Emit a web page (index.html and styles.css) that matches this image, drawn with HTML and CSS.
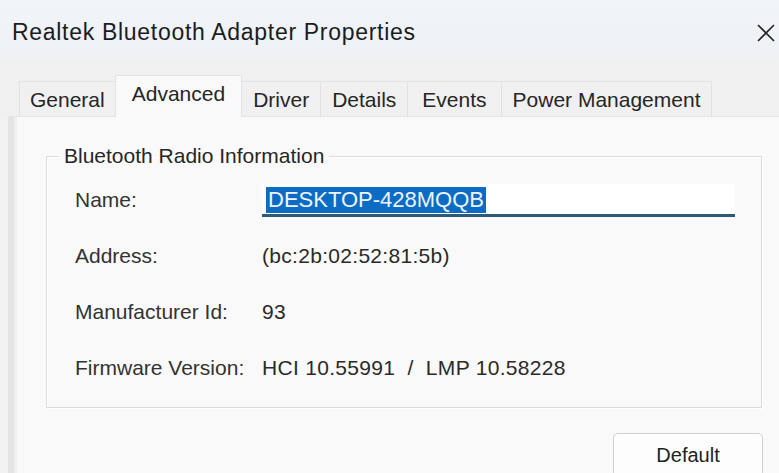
FILE: index.html
```html
<!DOCTYPE html>
<html lang="en">
<head>
<meta charset="utf-8">
<title>Realtek Bluetooth Adapter Properties</title>
<link rel="stylesheet" href="styles.css">
</head>
<body>
<div class="dialog">
  <header class="titlebar">
    <span class="title">Realtek Bluetooth Adapter Properties</span>
    <svg class="close" width="18" height="18" viewBox="0 0 18 18" aria-label="Close">
      <path d="M1 1 L17 17 M17 1 L1 17" stroke="#222" stroke-width="1.6" fill="none"/>
    </svg>
  </header>

  <nav class="tabs">
    <span class="tab">General</span>
    <span class="tab active">Advanced</span>
    <span class="tab">Driver</span>
    <span class="tab">Details</span>
    <span class="tab wide">Events</span>
    <span class="tab">Power Management</span>
  </nav>

  <section class="page">
    <fieldset class="group">
      <legend>Bluetooth Radio Information</legend>
      <div class="props">
        <span class="label">Name:</span>
        <div class="field"><span class="sel">DESKTOP-428MQQB</span></div>

        <span class="label">Address:</span>
        <span class="value">(bc:2b:02:52:81:5b)</span>

        <span class="label">Manufacturer Id:</span>
        <span class="value">93</span>

        <span class="label">Firmware Version:</span>
        <span class="value">HCI 10.55991&nbsp;&nbsp;/&nbsp;&nbsp;LMP 10.58228</span>
      </div>
    </fieldset>
    <div class="actions">
      <button class="btn" type="button">Default</button>
    </div>
  </section>
</div>
</body>
</html>
```

FILE: styles.css
```css
* { box-sizing: border-box; }

html, body {
  margin: 0;
  height: 100%;
  overflow: hidden;
}

body {
  background: #f2f2f2;
  font-family: "Liberation Sans", Arial, sans-serif;
  color: #2b2b2b;
}

.dialog {
  display: flex;
  flex-direction: column;
  height: 100%;
}

/* title bar */
.titlebar {
  flex: none;
  height: 62px;
  display: flex;
  align-items: center;
  justify-content: space-between;
  padding: 3px 4px 0 12px;
  background: linear-gradient(#f1f4f8, #eef2f6 70%, #f0f1f3);
}

.title {
  font-size: 23px;
  letter-spacing: 0.7px;
  color: #1c1c1c;
}

.close { display: block; }

/* tab strip */
.tabs {
  flex: none;
  display: flex;
  align-items: flex-end;
  height: 54px;
  padding-left: 20px;
  background: #f0f0f0;
}

.tab {
  height: 35px;
  padding: 2px 11px 0;
  display: flex;
  align-items: center;
  font-size: 21px;
  color: #262626;
  border: 1px solid #e2e2e2;
  border-bottom: none;
  margin-left: -1px;
  background: #f0f0f0;
}

.tab:first-child { padding: 2px 10px 0; }
.tab.wide { padding: 2px 14px 0; }

.tab.active {
  height: 42px;
  padding: 0 16px 6px;
  background: #f9f9f9;
  border-color: #e4e4e4;
  position: relative;
  z-index: 1;
  margin-bottom: -1px;
}

/* property page */
.page {
  flex: 1;
  min-height: 0;
  margin-left: 8px;
  border-left: 6px solid #e4e4e4;
  border-top: 1px solid #e4e4e4;
  background: #f9f9f9;
  box-shadow: inset 3px 0 0 #efefef;
  padding: 27px 17px 0 32px;
  display: flex;
  flex-direction: column;
}

.group {
  flex: none;
  margin: 0;
  padding: 4px 10px 11px 28px;
  border: 1px solid #dcdcdc;
  box-shadow: inset 1px 1px 0 #ffffff, 1px 1px 0 #ffffff;
  min-width: 0;
}

.group legend {
  margin-left: -16px;
  padding: 0 5px;
  font-size: 21px;
  line-height: 24px;
  color: #262626;
}

.props {
  display: grid;
  grid-template-columns: 187px 473px;
  grid-auto-rows: 56px;
  align-items: center;
  font-size: 21px;
}

.label { color: #333; }
.value { color: #2a2a2a; letter-spacing: 0.3px; }

.field {
  height: 33px;
  background: #ffffff;
  border-bottom: 3px solid #2c5a78;
  padding: 3px 0 0 4px;
}

.sel {
  display: inline-block;
  background: #0c6cc4;
  color: #eef4ff;
  font-size: 22px;
  line-height: 26px;
  padding: 0 2px;
}

.actions {
  flex: none;
  display: flex;
  justify-content: flex-end;
  padding-top: 25px;
}

.btn {
  width: 150px;
  height: 44px;
  font: inherit;
  font-size: 20px;
  color: #222;
  background: #fdfdfd;
  border: 1px solid #d0d0d0;
  border-radius: 5px;
  margin-right: -1px;
}
```
